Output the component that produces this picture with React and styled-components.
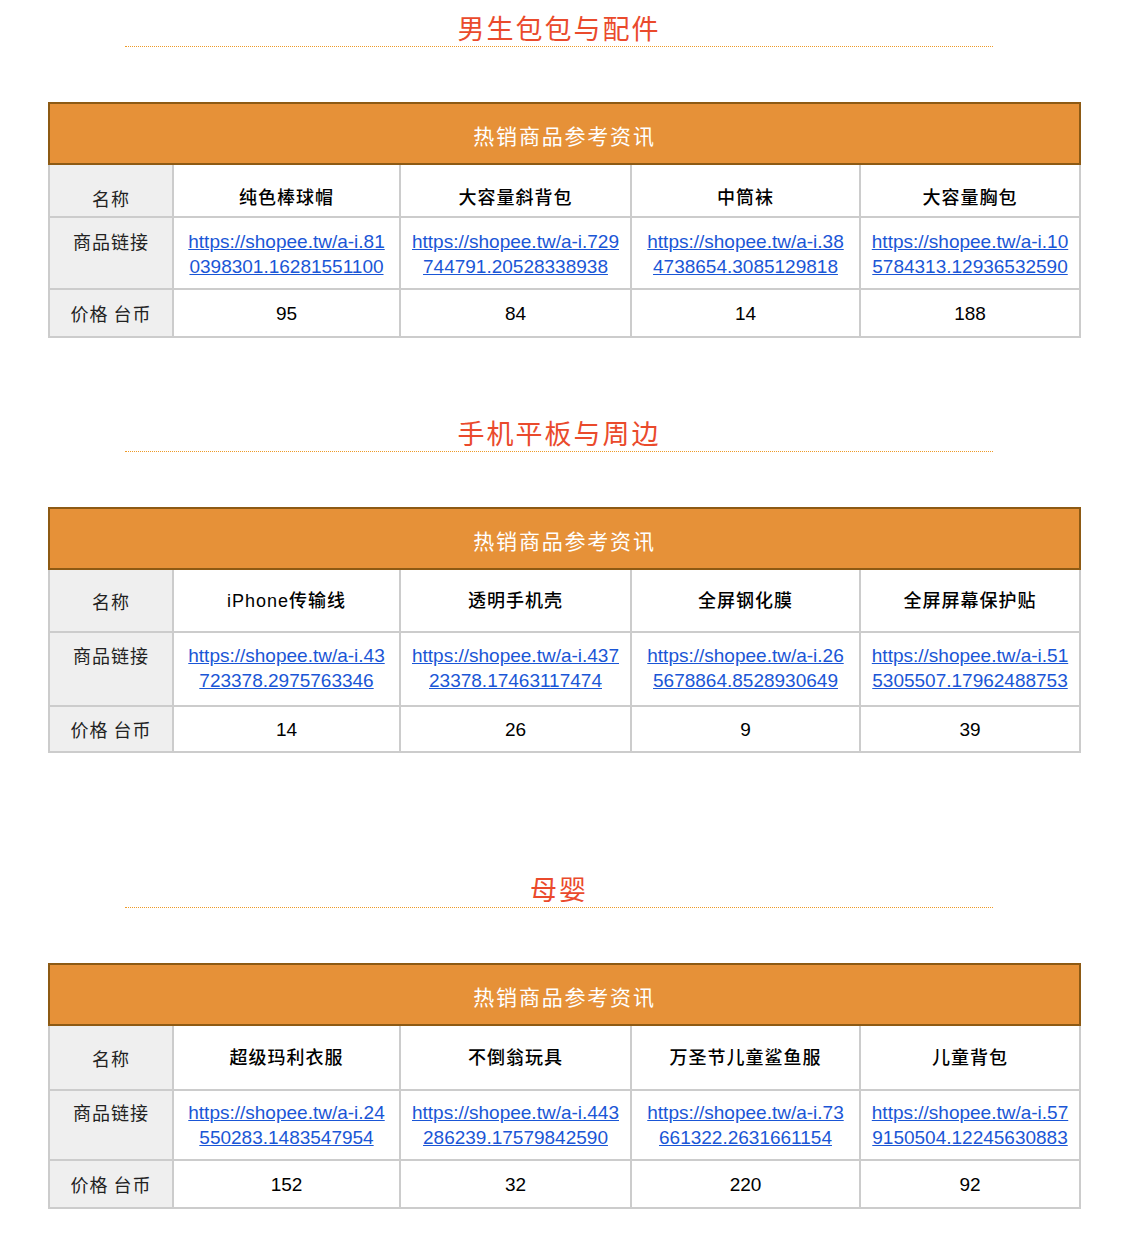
import React from "react";
import styled, { createGlobalStyle } from "styled-components";

const GlobalStyle = createGlobalStyle`
  body {
    margin: 0;
    background: #ffffff;
    font-family: "Liberation Sans", Arial, "Noto Sans CJK SC", sans-serif;
  }
`;

const Page = styled.div`
  width: 1124px;
  padding-bottom: 47px;
`;

const Section = styled.section`
  padding-top: ${(p) => p.$top}px;
`;

const Title = styled.h2`
  margin: 0 0 0 125px;
  width: 868px;
  height: 36px;
  line-height: 36px;
  text-align: center;
  font-family: "Noto Sans CJK SC", sans-serif;
  font-weight: 400;
  font-size: 27px;
  letter-spacing: 2px;
  color: #ea4a2c;
  border-bottom: 1px dotted #ee9a28;
`;

const Table = styled.table`
  margin: 55px 0 0 48px;
  width: 1031px;
  border-collapse: collapse;
  table-layout: fixed;
  border: 2px solid #bfbfbf;
`;

const HeadCell = styled.th`
  height: 57px;
  padding: 2px 0 0;
  background: #e69138;
  border: 2px solid #8d5a14;
  color: #ffffff;
  font-family: "Noto Sans CJK SC", sans-serif;
  font-weight: 400;
  font-size: 21px;
  letter-spacing: 1.8px;
  text-align: center;
`;

const Cell = styled.td`
  border: 2px solid #cccccc;
  text-align: center;
  vertical-align: ${(p) => (p.$top ? "top" : "middle")};
  padding: ${(p) => p.$pad || 0}px 0 0;
  height: ${(p) => p.$h}px;
  font-size: 19px;
  line-height: 25px;
  color: #000000;
  font-family: "Liberation Sans", Arial, "Noto Sans CJK SC", sans-serif;
`;

const Label = styled(Cell)`
  background: #efefef;
  color: #222222;
  font-family: "Noto Sans CJK SC", sans-serif;
  font-size: 18px;
  letter-spacing: 1px;
`;

const NameCell = styled(Cell)`
  font-family: "Liberation Sans", "Noto Sans CJK SC", sans-serif;
  font-size: 18px;
  font-weight: 500;
  letter-spacing: 1px;
`;

const Link = styled.a`
  color: #1a56d6;
  text-decoration: underline;
  white-space: nowrap;
`;

const widths = [124, 227, 231, 229, 220];

// 每个链接按原图的断行分成两行
const sections = [
  {
    top: 10,
    title: "男生包包与配件",
    h: [51, 61, 46],
    namePad: 15,
    linkPad: 11,
    items: [
      ["纯色棒球帽", "https://shopee.tw/a-i.81", "0398301.16281551100", "95"],
      ["大容量斜背包", "https://shopee.tw/a-i.729", "744791.20528338938", "84"],
      ["中筒袜", "https://shopee.tw/a-i.38", "4738654.3085129818", "14"],
      ["大容量胸包", "https://shopee.tw/a-i.10", "5784313.12936532590", "188"],
    ],
  },
  {
    top: 77,
    title: "手机平板与周边",
    h: [61, 63, 44],
    namePad: 2,
    linkPad: 10,
    items: [
      ["iPhone传输线", "https://shopee.tw/a-i.43", "723378.2975763346", "14"],
      ["透明手机壳", "https://shopee.tw/a-i.437", "23378.17463117474", "26"],
      ["全屏钢化膜", "https://shopee.tw/a-i.26", "5678864.8528930649", "9"],
      ["全屏屏幕保护贴", "https://shopee.tw/a-i.51", "5305507.17962488753", "39"],
    ],
  },
  {
    top: 118,
    title: "母婴",
    h: [63, 59, 46],
    namePad: 2,
    linkPad: 9,
    items: [
      ["超级玛利衣服", "https://shopee.tw/a-i.24", "550283.1483547954", "152"],
      ["不倒翁玩具", "https://shopee.tw/a-i.443", "286239.17579842590", "32"],
      ["万圣节儿童鲨鱼服", "https://shopee.tw/a-i.73", "661322.2631661154", "220"],
      ["儿童背包", "https://shopee.tw/a-i.57", "9150504.12245630883", "92"],
    ],
  },
];

const ProductTable = ({ section }) => {
  const [nameH, linkH, priceH] = section.h;
  const nameHeight = nameH - section.namePad;
  const linkHeight = linkH - (section.linkPad - 9);
  return (
    <Section $top={section.top}>
      <Title>{section.title}</Title>
      <Table>
        <colgroup>
          {widths.map((w, i) => (
            <col key={i} style={{ width: w }} />
          ))}
        </colgroup>
        <thead>
          <tr>
            <HeadCell colSpan={5}>热销商品参考资讯</HeadCell>
          </tr>
        </thead>
        <tbody>
          <tr>
            <Label $h={nameHeight} $pad={section.namePad}>
              名称
            </Label>
            {section.items.map((it) => (
              <NameCell key={it[0]} $h={nameHeight} $pad={section.namePad}>
                {it[0]}
              </NameCell>
            ))}
          </tr>
          <tr>
            <Label $top $h={linkHeight} $pad={section.linkPad}>
              商品链接
            </Label>
            {section.items.map((it) => (
              <Cell key={it[1] + it[2]} $top $h={linkHeight} $pad={section.linkPad}>
                <Link href={it[1] + it[2]}>
                  {it[1]}
                  <br />
                  {it[2]}
                </Link>
              </Cell>
            ))}
          </tr>
          <tr>
            <Label $h={priceH}>价格 台币</Label>
            {section.items.map((it) => (
              <Cell key={it[0] + "p"} $h={priceH}>
                {it[3]}
              </Cell>
            ))}
          </tr>
        </tbody>
      </Table>
    </Section>
  );
};

const App = () => (
  <>
    <GlobalStyle />
    <Page>
      {sections.map((s) => (
        <ProductTable key={s.title} section={s} />
      ))}
    </Page>
  </>
);

export default App;
